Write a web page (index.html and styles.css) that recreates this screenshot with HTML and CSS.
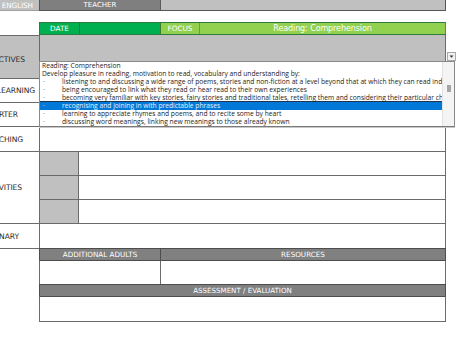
FILE: index.html
```html
<!DOCTYPE html>
<html>
<head>
<meta charset="utf-8">
<link rel="stylesheet" href="styles.css">
</head>
<body>
<div class="sheet">
  <div class="row r-top">
    <div class="lbl lbl-english">ENGLISH</div>
    <div class="cnt cnt-top">
      <div class="teacher">TEACHER</div>
      <div class="top-rest"></div>
    </div>
  </div>
  <div class="gap"></div>
  <div class="row r-green">
    <div class="lbl"></div>
    <div class="cnt cnt-green">
      <div class="date">DATE</div>
      <div class="date-val"></div>
      <div class="focus">FOCUS</div>
      <div class="focus-val">Reading: Comprehension</div>
    </div>
  </div>
  <div class="row r-obj">
    <div class="lbl bt gray lbl-obj">OBJECTIVES</div>
    <div class="cnt gray"></div>
  </div>
  <div class="row r-learn">
    <div class="lbl bt lbl-learn">LEARNING</div>
    <div class="cnt bt"></div>
  </div>
  <div class="row r-starter">
    <div class="lbl bt lbl-starter">STARTER</div>
    <div class="cnt bt"></div>
  </div>
  <div class="row r-teach">
    <div class="lbl bt lbl-teach">TEACHING</div>
    <div class="cnt bt"></div>
  </div>
  <div class="row r-act">
    <div class="lbl bt lbl-act">ACTIVITIES</div>
    <div class="cnt cnt-act">
      <div class="sub"><div class="sub-grey"></div><div class="sub-body"></div></div>
      <div class="sub"><div class="sub-grey"></div><div class="sub-body"></div></div>
      <div class="sub"><div class="sub-grey"></div><div class="sub-body"></div></div>
    </div>
  </div>
  <div class="row r-plenary">
    <div class="lbl bt lbl-plenary">PLENARY</div>
    <div class="cnt bt"></div>
  </div>
  <div class="row r-hdr">
    <div class="lbl bt"></div>
    <div class="cnt cnt-hdr">
      <div class="hdr-left">ADDITIONAL ADULTS</div>
      <div class="hdr-right">RESOURCES</div>
    </div>
  </div>
  <div class="row r-white">
    <div class="lbl"></div>
    <div class="cnt">
      <div class="white-left"></div>
      <div class="white-right"></div>
    </div>
  </div>
  <div class="row r-hdr2">
    <div class="lbl"></div>
    <div class="cnt cnt-hdr2">ASSESSMENT / EVALUATION</div>
  </div>
  <div class="row r-white2">
    <div class="lbl"></div>
    <div class="cnt cnt-last"></div>
  </div>

  <div class="drop-btn">
    <svg width="7" height="7" viewBox="0 0 7 7"><path d="M1.5 2.5 L5.5 2.5 L3.5 4.8 Z" fill="#333"/></svg>
  </div>
  <div class="drop-list">
    <div class="items">
      <div class="item">Reading: Comprehension</div>
      <div class="item">Develop pleasure in reading, motivation to read, vocabulary and understanding by:</div>
      <div class="item"><span class="dot">·</span>listening to and discussing a wide range of poems, stories and non-fiction at a level beyond that at which they can read independently</div>
      <div class="item"><span class="dot">·</span>being encouraged to link what they read or hear read to their own experiences</div>
      <div class="item"><span class="dot">·</span>becoming very familiar with key stories, fairy stories and traditional tales, retelling them and considering their particular characteristics</div>
      <div class="item sel"><span class="dot">·</span>recognising and joining in with predictable phrases</div>
      <div class="item"><span class="dot">·</span>learning to appreciate rhymes and poems, and to recite some by heart</div>
      <div class="item"><span class="dot">·</span>discussing word meanings, linking new meanings to those already known</div>
    </div>
    <div class="scroll"><div class="thumb"></div></div>
  </div>
</div>
</body>
</html>
```
FILE: styles.css
```css
html, body {
  margin: 0;
  padding: 0;
  background: #ffffff;
  overflow: hidden;
}
body {
  font-family: "DejaVu Sans", sans-serif;
}
.sheet {
  position: relative;
  width: 488px;
  margin-left: -42px;
}
.row {
  display: flex;
}
.lbl {
  width: 81px;
  flex: none;
  box-sizing: border-box;
  display: flex;
  align-items: center;
  justify-content: flex-end;
  font-size: 7.6px;
  color: #2b2b2b;
  letter-spacing: -0.1px;
  white-space: nowrap;
}
.cnt {
  width: 407px;
  flex: none;
  box-sizing: border-box;
  border-left: 1px solid #6b6b6b;
  border-right: 1px solid #6b6b6b;
  display: flex;
}
.bt {
  border-top: 1px solid #6b6b6b;
}
.gray {
  background: #c0c0c0;
}

/* top row */
.r-top { height: 11px; }
.lbl-english {
  background: #c0c0c0;
  color: #ffffff;
  padding-right: 6px;
  border-bottom: 1px solid #a0a0a0;
  font-size: 7.3px;
}
.cnt-top {
  border-bottom: 1px solid #555555;
  border-left-color: #555555;
  border-right-color: #555555;
}
.teacher {
  width: 121px;
  box-sizing: border-box;
  background: #7f7f7f;
  border-right: 1px solid #5a5a5a;
  color: #ffffff;
  font-size: 7px;
  display: flex;
  align-items: center;
  justify-content: center;
}
.top-rest {
  flex: 1;
  background: #c0c0c0;
}
.gap { height: 11px; }

/* green row */
.r-green { height: 13px; }
.cnt-green {
  border: 1px solid #2f7a3f;
  border-right-color: #5c8f34;
  color: #ffffff;
  font-size: 7.3px;
}
.cnt-green > div {
  display: flex;
  align-items: center;
  justify-content: center;
  box-sizing: border-box;
}
.date {
  width: 40px;
  background: #00b050;
  border-right: 1px solid #1f7a3c;
}
.date-val {
  width: 81px;
  background: #00b050;
  border-right: 1px solid #3f7a2f;
}
.focus {
  width: 39px;
  background: #92d050;
  border-right: 1px solid #6e9e3c;
}
.focus-val {
  flex: 1;
  background: #92d050;
  font-size: 8px;
  letter-spacing: -0.1px;
}

/* body rows */
.r-obj { height: 43px; }
.lbl-obj { padding-right: 14px; padding-top: 4px; }
.r-learn { height: 24px; }
.lbl-learn { padding-right: 4px; }
.r-starter { height: 24px; }
.lbl-starter { padding-right: 21px; }
.r-teach { height: 25px; }
.lbl-teach { padding-right: 16px; }
.r-act { height: 72px; }
.lbl-act { padding-right: 17px; }
.cnt-act { flex-direction: column; }
.sub {
  flex: 1;
  display: flex;
  border-top: 1px solid #6b6b6b;
}
.sub-grey {
  width: 39px;
  box-sizing: border-box;
  background: #c0c0c0;
  border-right: 1px solid #6b6b6b;
}
.sub-body { flex: 1; }
.r-plenary { height: 25px; }
.lbl-plenary { padding-right: 20px; }

/* headers */
.r-hdr { height: 12px; }
.cnt-hdr {
  background: #808080;
  border-top: 1px solid #4d4d4d;
  border-left-color: #4d4d4d;
  border-right-color: #4d4d4d;
  color: #ffffff;
  font-size: 7.2px;
}
.hdr-left, .hdr-right {
  display: flex;
  align-items: center;
  justify-content: center;
  box-sizing: border-box;
}
.hdr-left {
  width: 121px;
  border-right: 1px solid #4d4d4d;
}
.hdr-right { flex: 1; }
.r-white { height: 24px; }
.r-white .cnt { border-top: 1px solid #4d4d4d; }
.white-left {
  width: 121px;
  box-sizing: border-box;
  border-right: 1px solid #6b6b6b;
}
.white-right { flex: 1; }
.r-hdr2 { height: 12px; }
.cnt-hdr2 {
  background: #808080;
  border-top: 1px solid #4d4d4d;
  border-left-color: #4d4d4d;
  border-right-color: #4d4d4d;
  color: #ffffff;
  font-size: 7.1px;
  align-items: center;
  justify-content: center;
}
.r-white2 { height: 26px; }
.cnt-last {
  border-top: 1px solid #4d4d4d;
  border-bottom: 1px solid #6b6b6b;
}

/* dropdown */
.drop-btn {
  position: absolute;
  left: 489px;
  top: 52px;
  width: 9px;
  height: 9px;
  box-sizing: border-box;
  background: #f0f0f0;
  border: 1px solid #a8a8a8;
  display: flex;
  align-items: center;
  justify-content: center;
}
.drop-btn svg { display: block; }
.drop-list {
  position: absolute;
  left: 81px;
  top: 61px;
  width: 416px;
  height: 66px;
  box-sizing: border-box;
  background: #ffffff;
  border: 1px solid #8a8a8a;
  border-bottom-color: #7a7a7a;
  box-shadow: 0 1px 0 #c8c8c8;
  display: flex;
}
.items {
  flex: 1;
  overflow: hidden;
  font-family: "Open Sans", "DejaVu Sans", sans-serif;
  font-size: 6.7px;
  color: #1c1c1c;
}
.item {
  height: 8px;
  line-height: 8px;
  padding-left: 2px;
  white-space: nowrap;
  overflow: hidden;
}
.dot {
  display: inline-block;
  width: 19px;
  padding-left: 1px;
}
.item.sel {
  background: #0078d7;
  color: #e8f2fb;
  box-shadow: 0 -1px 0 #1d3550;
}
.scroll {
  width: 11px;
  flex: none;
  background: #f4f4f4;
  border-left: 1px solid #e2e2e2;
}
.thumb {
  width: 4px;
  height: 7px;
  margin-top: 23px;
  margin-left: 4px;
  background: #a6a6a6;
}
```
